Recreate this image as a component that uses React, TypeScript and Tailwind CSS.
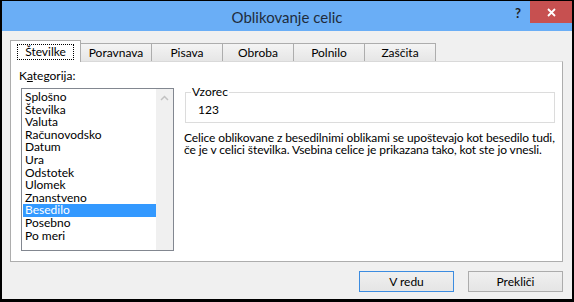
import React from "react";

const categories = [
  "Splošno",
  "Številka",
  "Valuta",
  "Računovodsko",
  "Datum",
  "Ura",
  "Odstotek",
  "Ulomek",
  "Znanstveno",
  "Besedilo",
  "Posebno",
  "Po meri",
];

const tabs = ["Poravnava", "Pisava", "Obroba", "Polnilo", "Zaščita"];

export default function App() {
  return (
    <div
      className="h-[302px] w-[574px] bg-black pb-[3px] pl-[2px] pr-[2px] pt-px text-[12px] text-black"
      style={{ fontFamily: 'Lato, "Noto Sans", sans-serif' }}
    >
      <div className="flex h-full flex-col bg-[#f0f0f0]">
        {/* title bar */}
        <div className="grid h-[30px] grid-cols-[1fr_auto_1fr] bg-[#6aaef6]">
          <div />
          <div className="pt-[5px] text-[15px] text-[#1f2c3c]">Oblikovanje celic</div>
          <div className="flex items-start justify-end">
            <span className="mr-[9px] mt-[3px] text-[13px] font-bold text-[#1e1e1e]">?</span>
            <div className="flex h-[22px] w-[42px] items-center justify-center bg-[#c75050]">
              <svg width="9" height="9" viewBox="0 0 9 9">
                <path d="M1 1 L8 8 M8 1 L1 8" stroke="white" strokeWidth="1.8" />
              </svg>
            </div>
          </div>
        </div>

        {/* tabs */}
        <div className="ml-[8px] mr-[9px] mt-[9px] flex items-end">
          <div className="relative z-10 -mb-px flex h-[22px] w-[71px] items-start justify-center border border-b-0 border-[#adadad] bg-white pt-[3px]">
            <span className="border border-dotted border-black px-[7px] leading-[14px]">Številke</span>
          </div>
          {tabs.map((t) => (
            <div
              key={t}
              className="flex h-[18px] w-[71px] items-center justify-center border border-b-0 border-l-0 border-[#adadad] bg-gradient-to-b from-[#f4f4f4] to-[#e6e6e6]"
            >
              {t}
            </div>
          ))}
        </div>

        {/* panel */}
        <div className="ml-[8px] mr-[9px] flex h-[201px] border border-[#adadad] border-t-[#d9d9d9] bg-white">
          <div className="flex w-[165px] flex-col pl-[8px] pt-[7px]">
            <div className="leading-[14px]">
              K<span className="underline">a</span>tegorija:
            </div>
            <div className="ml-[2px] mt-[5px] flex h-[163px] w-[153px] border border-[#828790] bg-white">
              <div className="flex flex-1 flex-col pl-px pt-[2px]">
                {categories.map((c) => (
                  <div
                    key={c}
                    className={
                      c === "Besedilo"
                        ? "h-[12.6px] bg-[#3399ff] pl-[2px] leading-[12.6px] text-white"
                        : "h-[12.6px] pl-[2px] leading-[12.6px]"
                    }
                  >
                    {c}
                  </div>
                ))}
              </div>
              <div className="flex w-[17px] justify-center bg-[#f0f0f0] pt-[6px]">
                <svg width="9" height="6" viewBox="0 0 9 6">
                  <path d="M1 5 L4.5 1.5 L8 5" stroke="#c2c2c2" strokeWidth="1.5" fill="none" />
                </svg>
              </div>
            </div>
          </div>

          <div className="flex flex-1 flex-col pr-[9px] pt-[30px]">
            <div className="relative ml-[11px] h-[31px] border border-[#dcdcdc]">
              <span className="absolute left-[5px] top-[-8px] bg-white px-px leading-[14px]">Vzorec</span>
              <div className="pl-[12px] pt-[10px] leading-[14px]">123</div>
            </div>
            <p className="ml-[10px] mt-[9px] whitespace-nowrap leading-[12px] tracking-[-0.1px]">
              Celice oblikovane z besedilnimi oblikami se upoštevajo kot besedilo tudi,
              <br />
              če je v celici številka. Vsebina celice je prikazana tako, kot ste jo vnesli.
            </p>
          </div>
        </div>

        {/* buttons */}
        <div className="mr-[9px] mt-[9px] flex justify-end gap-[14px]">
          <button className="h-[21px] w-[95px] border border-[#3c8ce0] bg-gradient-to-b from-[#f0f0f0] to-[#e5e5e5]">
            V redu
          </button>
          <button className="h-[21px] w-[95px] border border-[#acacac] bg-gradient-to-b from-[#f0f0f0] to-[#e5e5e5]">
            Prekliči
          </button>
        </div>
      </div>
    </div>
  );
}
